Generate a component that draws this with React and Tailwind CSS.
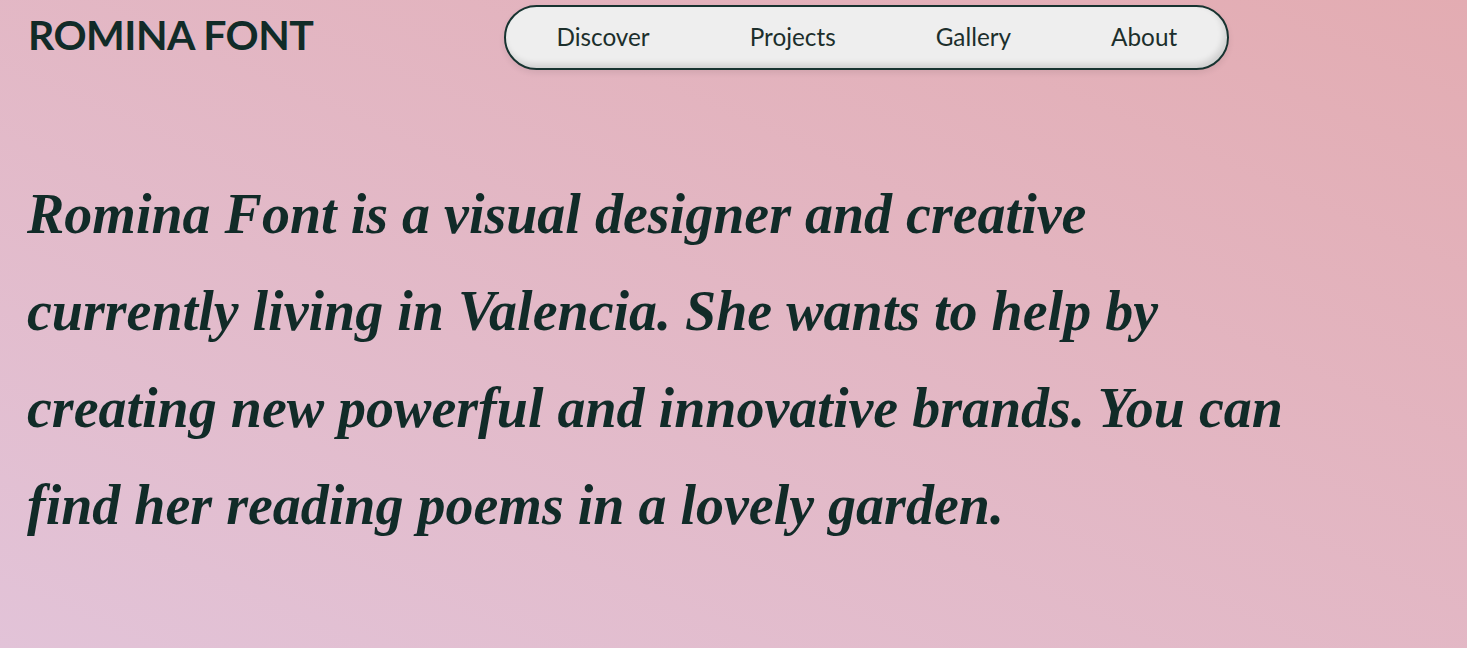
import React from 'react';

const links = ['Discover', 'Projects', 'Gallery', 'About'];

const App = () => {
  return (
    <div className="min-h-screen w-full overflow-hidden bg-linear-to-tr from-[#e2c3d8] to-[#e3acb2] text-[#112b28]">
      {/* ── Header ── */}
      <header className="flex items-start pt-[5px] pl-[28px]">
        <span className="-mt-[1px] text-[41px] font-bold tracking-[-0.5px] font-['Lato',sans-serif] select-none">
          ROMINA FONT
        </span>
        <nav className="ml-[191px] flex items-center h-[65px] px-[50px] gap-[100px] rounded-full border-2 border-[#173330] bg-[#eeeeee] shadow-[inset_-3px_-4px_6px_rgba(0,0,0,0.13),0_3px_6px_rgba(0,0,0,0.08)]">
          {links.map((link) => (
            <a
              key={link}
              href="#"
              className="-mt-[1px] text-[24.3px] text-[#1c2f2c] font-['Lato',sans-serif]"
            >
              {link}
            </a>
          ))}
        </nav>
      </header>

      {/* ── Intro ── */}
      <main className="pl-[27px] pt-[96px]">
        <h1 className="text-[56px] leading-[97px] font-bold italic whitespace-nowrap font-['Liberation_Serif',serif]">
          Romina Font is a visual designer and creative
          <br />
          currently living in Valencia. She wants to help by
          <br />
          creating new powerful and innovative brands. You can
          <br />
          find her reading poems in a lovely garden.
        </h1>
      </main>
    </div>
  );
};

export default App;
